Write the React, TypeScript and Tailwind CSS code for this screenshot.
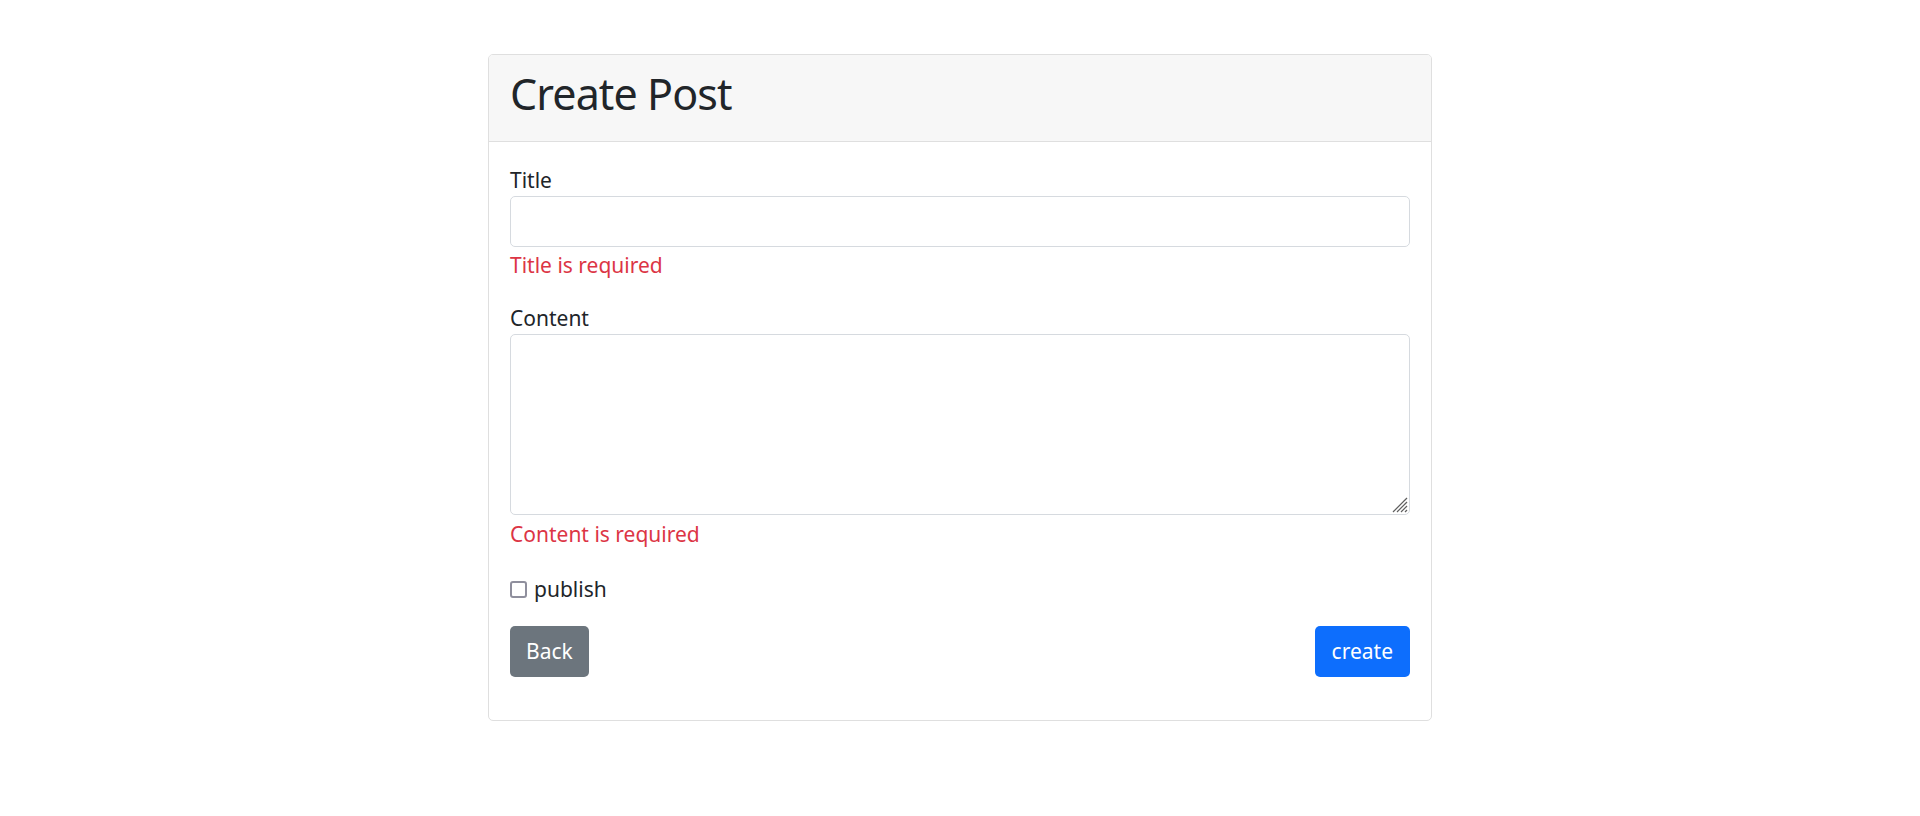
import React from "react";

export default function App() {
  return (
    <div
      className="min-h-screen bg-white pt-[54px] text-[#212529]"
      style={{ fontFamily: '"Noto Sans", "Open Sans", sans-serif' }}
    >
      <div className="mx-auto w-[944px] overflow-hidden rounded-[5px] border border-[#dfdfdf]">
        <div className="border-b border-[#dfdfdf] bg-[#f7f7f7] px-[21px] pt-[12px] pb-[20px]">
          <h1 className="text-[43px] leading-[54px] font-normal tracking-[-0.9px]">Create Post</h1>
        </div>
        <div className="px-[21px] pt-[22px] pb-[43px]">
          <label className="block text-[21px] leading-[32px]">Title</label>
          <input
            type="text"
            className="block h-[51px] w-full rounded-[5px] border border-[#d6dadf] px-[16px] text-[21px] outline-none"
          />
          <div className="mt-[2px] text-[21px] leading-[32px] text-[#dc3545]">Title is required</div>

          <label className="mt-[21px] block text-[21px] leading-[32px]">Content</label>
          <div className="relative">
            <textarea className="block h-[181px] w-full resize-none rounded-[5px] border border-[#d6dadf] px-[16px] text-[21px] outline-none" />
            <svg
              className="pointer-events-none absolute right-[2px] bottom-[2px]"
              width="18"
              height="18"
              viewBox="0 0 18 18"
            >
              <g stroke="#5f5f5f" strokeWidth="1.2">
                <line x1="17" y1="3" x2="3" y2="17" />
                <line x1="17" y1="7" x2="7" y2="17" />
                <line x1="17" y1="11" x2="11" y2="17" />
                <line x1="17" y1="15" x2="15" y2="17" />
              </g>
            </svg>
          </div>
          <div className="mt-[3px] text-[21px] leading-[32px] text-[#dc3545]">Content is required</div>

          <div className="mt-[23px] flex h-[32px] items-center gap-[7px]">
            <input
              type="checkbox"
              className="m-0 h-[17px] w-[17px] appearance-none rounded-[3px] border-2 border-[#8f8f9d] bg-white"
            />
            <span className="text-[21px] leading-[32px]">publish</span>
          </div>

          <div className="mt-[21px] flex items-center justify-between">
            <button className="h-[51px] rounded-[5px] bg-[#6c757d] px-[16px] text-[21px] text-white">
              Back
            </button>
            <button className="h-[51px] rounded-[5px] bg-[#0d6efd] px-[17px] text-[21px] text-white">
              create
            </button>
          </div>
        </div>
      </div>
    </div>
  );
}
